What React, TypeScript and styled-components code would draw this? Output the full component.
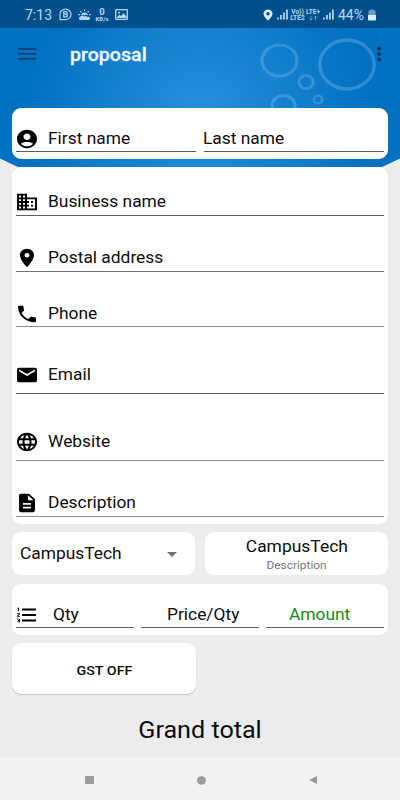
import React from "react";
import styled, { createGlobalStyle } from "styled-components";
import {
  MdAccountCircle,
  MdBusiness,
  MdDescription,
  MdEmail,
  MdFormatListNumbered,
  MdLanguage,
  MdLocationOn,
  MdPhone,
} from "react-icons/md";

const GlobalStyle = createGlobalStyle`
  * { box-sizing: border-box; }
  body {
    margin: 0;
    background: #ececec;
    font-family: Roboto, "Liberation Sans", sans-serif;
    color: #0c0c0c;
  }
`;

const Screen = styled.div`
  position: relative;
  isolation: isolate;
  width: 400px;
  height: 800px;
  display: flex;
  flex-direction: column;
  overflow: hidden;
  background: #ececec;
`;

const Backdrop = styled.svg`
  position: absolute;
  z-index: -1;
  top: 0;
  left: 0;
`;

const StatusBar = styled.header`
  height: 28px;
  flex: none;
  display: flex;
  align-items: center;
  justify-content: space-between;
  padding: 1px 24px 0 25px;
  background: #01508c;
  color: #b5d8f2;
`;

const StatusGroup = styled.div`
  display: flex;
  align-items: center;
`;

const StatusText = styled.span<{ $w: number; $gap?: number }>`
  width: ${(p) => p.$w}px;
  margin-left: ${(p) => p.$gap ?? 0}px;
  font-size: 14px;
  line-height: 16px;
  white-space: nowrap;
`;

const TinyStack = styled.div<{ $w: number; $gap: number }>`
  width: ${(p) => p.$w}px;
  margin-left: ${(p) => p.$gap}px;
  display: flex;
  flex-direction: column;
  align-items: center;
  font-weight: 700;
  white-space: nowrap;
`;

const Tiny = styled.span<{ $size: number; $line: number }>`
  font-size: ${(p) => p.$size}px;
  line-height: ${(p) => p.$line}px;
`;

const Glyph = styled.svg<{ $gap?: number }>`
  display: block;
  flex: none;
  margin-left: ${(p) => p.$gap ?? 0}px;
`;

const Toolbar = styled.div`
  height: 52px;
  flex: none;
  display: flex;
  align-items: center;
  padding: 0 18px;
`;

const Title = styled.h1`
  margin: 1px auto 0 34px;
  font-size: 18.5px;
  line-height: 24px;
  font-weight: 500;
  color: #eefaff;
  -webkit-text-stroke: 0.3px #eefaff;
  transform: scaleX(1.06);
  transform-origin: left;
`;

const Form = styled.main`
  flex: 1;
  display: flex;
  flex-direction: column;
  padding: 28px 12px 0;
`;

const Card = styled.section<{ $h: number; $gap?: number }>`
  height: ${(p) => p.$h}px;
  margin-bottom: ${(p) => p.$gap ?? 8}px;
  flex: none;
  background: #fff;
  border-radius: 9px;
`;

const InlineCard = styled(Card)`
  display: flex;
  align-items: flex-start;
  justify-content: space-between;
  padding: 0 4px;
`;

const StackCard = styled(Card)`
  padding: 0 4px;
`;

const Field = styled.div<{ $h: number; $drop?: number; $w?: number; $line?: string }>`
  height: ${(p) => p.$h}px;
  width: ${(p) => (p.$w ? `${p.$w}px` : "100%")};
  flex: none;
  display: flex;
  align-items: flex-end;
  padding-bottom: ${(p) => p.$drop ?? 2}px;
  border-bottom: 1px solid ${(p) => p.$line ?? "#5c5c5c"};
  svg {
    width: 24px;
    height: 22px;
    margin-left: -1px;
    flex: none;
    color: #000;
  }
`;

const Label = styled.span<{ $indent?: number; $color?: string }>`
  margin-left: ${(p) => p.$indent ?? 9}px;
  font-size: 16px;
  line-height: 22px;
  white-space: nowrap;
  color: ${(p) => p.$color ?? "#0c0c0c"};
  transform: scaleX(1.085);
  transform-origin: left;
`;

const Pair = styled.div`
  display: flex;
  justify-content: space-between;
`;

const Picker = styled(Card)`
  width: 183px;
  display: flex;
  align-items: center;
  justify-content: space-between;
  padding: 1px 18px 0 0;
`;

const Summary = styled(Card)`
  width: 183px;
  display: flex;
  flex-direction: column;
  align-items: center;
  padding-top: 4px;
`;

const SummaryName = styled.span`
  font-size: 16px;
  line-height: 22px;
  transform: scaleX(1.09);
`;

const SummaryNote = styled.span`
  font-size: 10.5px;
  line-height: 15px;
  color: #777;
  transform: scaleX(1.13);
`;

const ToggleButton = styled.button`
  width: 184px;
  height: 51px;
  flex: none;
  border: 0;
  border-radius: 9px;
  padding: 2px 0 0;
  background: #fff;
  box-shadow: 0 1px 1px rgba(0, 0, 0, 0.16);
  font-family: inherit;
  font-size: 13.5px;
  font-weight: 500;
  color: #0c0c0c;
  span {
    display: inline-block;
    transform: scaleX(1.06);
  }
`;

const Total = styled.div`
  margin-top: 19px;
  text-align: center;
  font-size: 23.5px;
  line-height: 34px;
  color: #0c0c0c;
  transform: scaleX(1.07);
`;

const NavBar = styled.nav`
  height: 43px;
  flex: none;
  display: flex;
  align-items: center;
  justify-content: space-between;
  padding: 3px 83px 0 85px;
  background: #f2f2f2;
`;

const Signal = ({ gap }: { gap: number }) => (
  <Glyph $gap={gap} width="11" height="11" viewBox="0 0 11 11" fill="#a9cdea">
    <rect x="0" y="8.5" width="1.9" height="2" />
    <rect x="3" y="6" width="1.9" height="4.5" />
    <rect x="6" y="3.5" width="1.9" height="7" />
    <rect x="9" y="0.5" width="1.9" height="10" />
  </Glyph>
);

const rows = [
  { label: "Business name", Icon: MdBusiness, h: 49, drop: 2, line: "#5c5c5c" },
  { label: "Postal address", Icon: MdLocationOn, h: 56, drop: 2, line: "#757575" },
  { label: "Phone", Icon: MdPhone, h: 55, drop: 1, line: "#8c8c8c" },
  { label: "Email", Icon: MdEmail, h: 67, drop: 7, line: "#5c5c5c" },
  { label: "Website", Icon: MdLanguage, h: 67, drop: 7, line: "#8c8c8c" },
  { label: "Description", Icon: MdDescription, h: 56, drop: 2, line: "#8c8c8c" },
];

export default function App() {
  return (
    <>
      <GlobalStyle />
      <Screen>
        <Backdrop width="400" height="170" viewBox="0 0 400 170">
          <defs>
            <radialGradient id="sky" gradientUnits="userSpaceOnUse" cx="200" cy="118" r="175">
              <stop offset="0" stopColor="#2690e0" />
              <stop offset="0.35" stopColor="#1b85d5" />
              <stop offset="1" stopColor="#0070c0" />
            </radialGradient>
          </defs>
          <path d="M0 0H400V158.500L382 167H18L0 158.500Z" fill="url(#sky)" />
          <g fill="none" stroke="#63b0e6" strokeOpacity="0.46">
            <ellipse cx="279.500" cy="60.500" rx="17.500" ry="15.500" strokeWidth="3.200" />
            <ellipse cx="347" cy="64.500" rx="27.200" ry="24.500" strokeWidth="3.400" />
            <ellipse cx="306" cy="82" rx="7.200" ry="6.500" strokeWidth="3" />
            <ellipse cx="283.500" cy="106" rx="11.500" ry="10.500" strokeWidth="3.200" />
            <ellipse cx="318" cy="99.500" rx="4.200" ry="3.700" strokeWidth="2.600" />
          </g>
        </Backdrop>

        <StatusBar>
          <StatusGroup>
            <StatusText $w={27}>7:13</StatusText>
            <Glyph $gap={7} width="13" height="13" viewBox="0 0 13 13">
              <path d="M1 12V6.200A5.500 5.300 0 1 1 6.500 11.700H1Z" fill="none" stroke="currentColor" strokeWidth="1.200" />
              <path d="M4.800 3.700H6.900A1.250 1.250 0 0 1 6.900 6.200H4.800ZM4.800 6.200H7.100A1.350 1.350 0 0 1 7.100 8.900H4.800Z" fill="none" stroke="currentColor" strokeWidth="1.300" />
            </Glyph>
            <Glyph $gap={6} width="13" height="12" viewBox="0 0 13 12">
              <path d="M6.500 0.500V2M2.300 2L3.500 3.300M10.700 2L9.500 3.300M0.300 5.600H2M11 5.600H12.700" stroke="currentColor" strokeWidth="1.100" />
              <path d="M3 6.300A3.600 3.600 0 0 1 10 6.300Q8 5.300 6.300 6.500Q4.500 5 3 6.300Z" fill="currentColor" />
              <path d="M2 11A1.900 1.900 0 0 1 2.300 7.500Q4.200 5.700 6 7.600Q8 6.100 9.400 7.900A1.900 1.600 0 0 1 10.800 11Z" fill="currentColor" />
            </Glyph>
            <TinyStack $w={14} $gap={4}>
              <Tiny $size={9.5} $line={8}>0</Tiny>
              <Tiny $size={6} $line={6}>KB/s</Tiny>
            </TinyStack>
            <Glyph $gap={6} width="13" height="11" viewBox="0 0 13 11">
              <rect x="0.700" y="0.700" width="11.600" height="9.600" rx="0.600" fill="none" stroke="currentColor" strokeWidth="1.300" />
              <circle cx="4" cy="3.700" r="1" fill="currentColor" />
              <path d="M1.500 8.700L4.300 5.800L6 7.100L8.600 4.200L11.500 7.500V9H1.500Z" fill="currentColor" />
            </Glyph>
          </StatusGroup>
          <StatusGroup>
            <Glyph width="10" height="12" viewBox="0 0 10 12">
              <path fillRule="evenodd" fill="#d9effd" d="M5 0.500A4.500 4.200 0 0 0 0.500 4.700C0.500 7.500 5 11.700 5 11.700S9.500 7.500 9.500 4.700A4.500 4.200 0 0 0 5 0.500ZM5 3A1.700 1.700 0 1 1 5 6.400A1.700 1.700 0 0 1 5 3Z" />
            </Glyph>
            <Signal gap={4} />
            <TinyStack $w={15} $gap={2}>
              <Tiny $size={6.6} $line={6}>Vo))</Tiny>
              <Tiny $size={6.6} $line={6}>LTE2</Tiny>
            </TinyStack>
            <TinyStack $w={14} $gap={1}>
              <Tiny $size={6.4} $line={6}>LTE+</Tiny>
              <Glyph width="9" height="6" viewBox="0 0 9 6" fill="none" stroke="#6aa5d4" strokeWidth="0.900">
                <path d="M2 1V5M0.500 3.500L2 5L3.500 3.500M6.500 5V1M5 2.500L6.500 1L8 2.500" />
              </Glyph>
            </TinyStack>
            <Signal gap={3} />
            <StatusText $w={27} $gap={4}>44%</StatusText>
            <Glyph $gap={3} width="8" height="12" viewBox="0 0 8 12">
              <path d="M2.500 0.500H5.500V1.600H7.500V6H0.500V1.600H2.500Z" fill="#6a9ec8" />
              <path d="M0 6H8V10.700Q8 11.500 7.200 11.500H0.800Q0 11.500 0 10.700Z" fill="#d9effd" />
            </Glyph>
          </StatusGroup>
        </StatusBar>

        <Toolbar>
          <Glyph width="18" height="12" viewBox="0 0 18 12">
            <path d="M0 1H18M0 5.800H18M0 10.700H18" stroke="#0b3a63" strokeWidth="1.600" />
          </Glyph>
          <Title>proposal</Title>
          <Glyph width="6" height="16" viewBox="0 0 6 16" fill="#0b3253">
            <circle cx="3" cy="2.500" r="1.950" />
            <circle cx="3" cy="8" r="1.950" />
            <circle cx="3" cy="13.500" r="1.950" />
          </Glyph>
        </Toolbar>

        <Form>
          <InlineCard $h={51}>
            <Field $h={44} $w={180} $drop={1}>
              <MdAccountCircle preserveAspectRatio="none" />
              <Label>First name</Label>
            </Field>
            <Field $h={44} $w={180} $drop={1}>
              <Label $indent={-1}>Last name</Label>
            </Field>
          </InlineCard>

          <StackCard $h={357}>
            {rows.map(({ label, Icon, h, drop, line }) => (
              <Field key={label} $h={h} $drop={drop} $line={line}>
                <Icon preserveAspectRatio="none" />
                <Label>{label}</Label>
              </Field>
            ))}
          </StackCard>

          <Pair>
            <Picker $h={43} $gap={9}>
              <Label $indent={7.5}>CampusTech</Label>
              <Glyph width="10" height="5" viewBox="0 0 10 5">
                <path d="M0 0H10L5 5Z" fill="#737373" />
              </Glyph>
            </Picker>
            <Summary $h={43} $gap={9}>
              <SummaryName>CampusTech</SummaryName>
              <SummaryNote>Description</SummaryNote>
            </Summary>
          </Pair>

          <InlineCard $h={51}>
            <Field $h={44} $w={118} $drop={1}>
              <MdFormatListNumbered preserveAspectRatio="none" />
              <Label $indent={14}>Qty</Label>
            </Field>
            <Field $h={44} $w={118} $drop={1}>
              <Label $indent={26}>Price/Qty</Label>
            </Field>
            <Field $h={44} $w={118} $drop={1}>
              <Label $indent={23} $color="#148a1e">Amount</Label>
            </Field>
          </InlineCard>

          <ToggleButton><span>GST OFF</span></ToggleButton>
          <Total>Grand total</Total>
        </Form>

        <NavBar>
          <Glyph width="9" height="8" viewBox="0 0 9 8">
            <rect width="9" height="8" rx="0.800" fill="#9b9b9b" />
          </Glyph>
          <Glyph width="10" height="9" viewBox="0 0 10 9">
            <ellipse cx="4.500" cy="4.500" rx="4.500" ry="4.200" fill="#9b9b9b" />
          </Glyph>
          <Glyph width="8" height="8" viewBox="0 0 8 8">
            <path d="M8 0V8L0 4Z" fill="#9b9b9b" />
          </Glyph>
        </NavBar>
      </Screen>
    </>
  );
}
